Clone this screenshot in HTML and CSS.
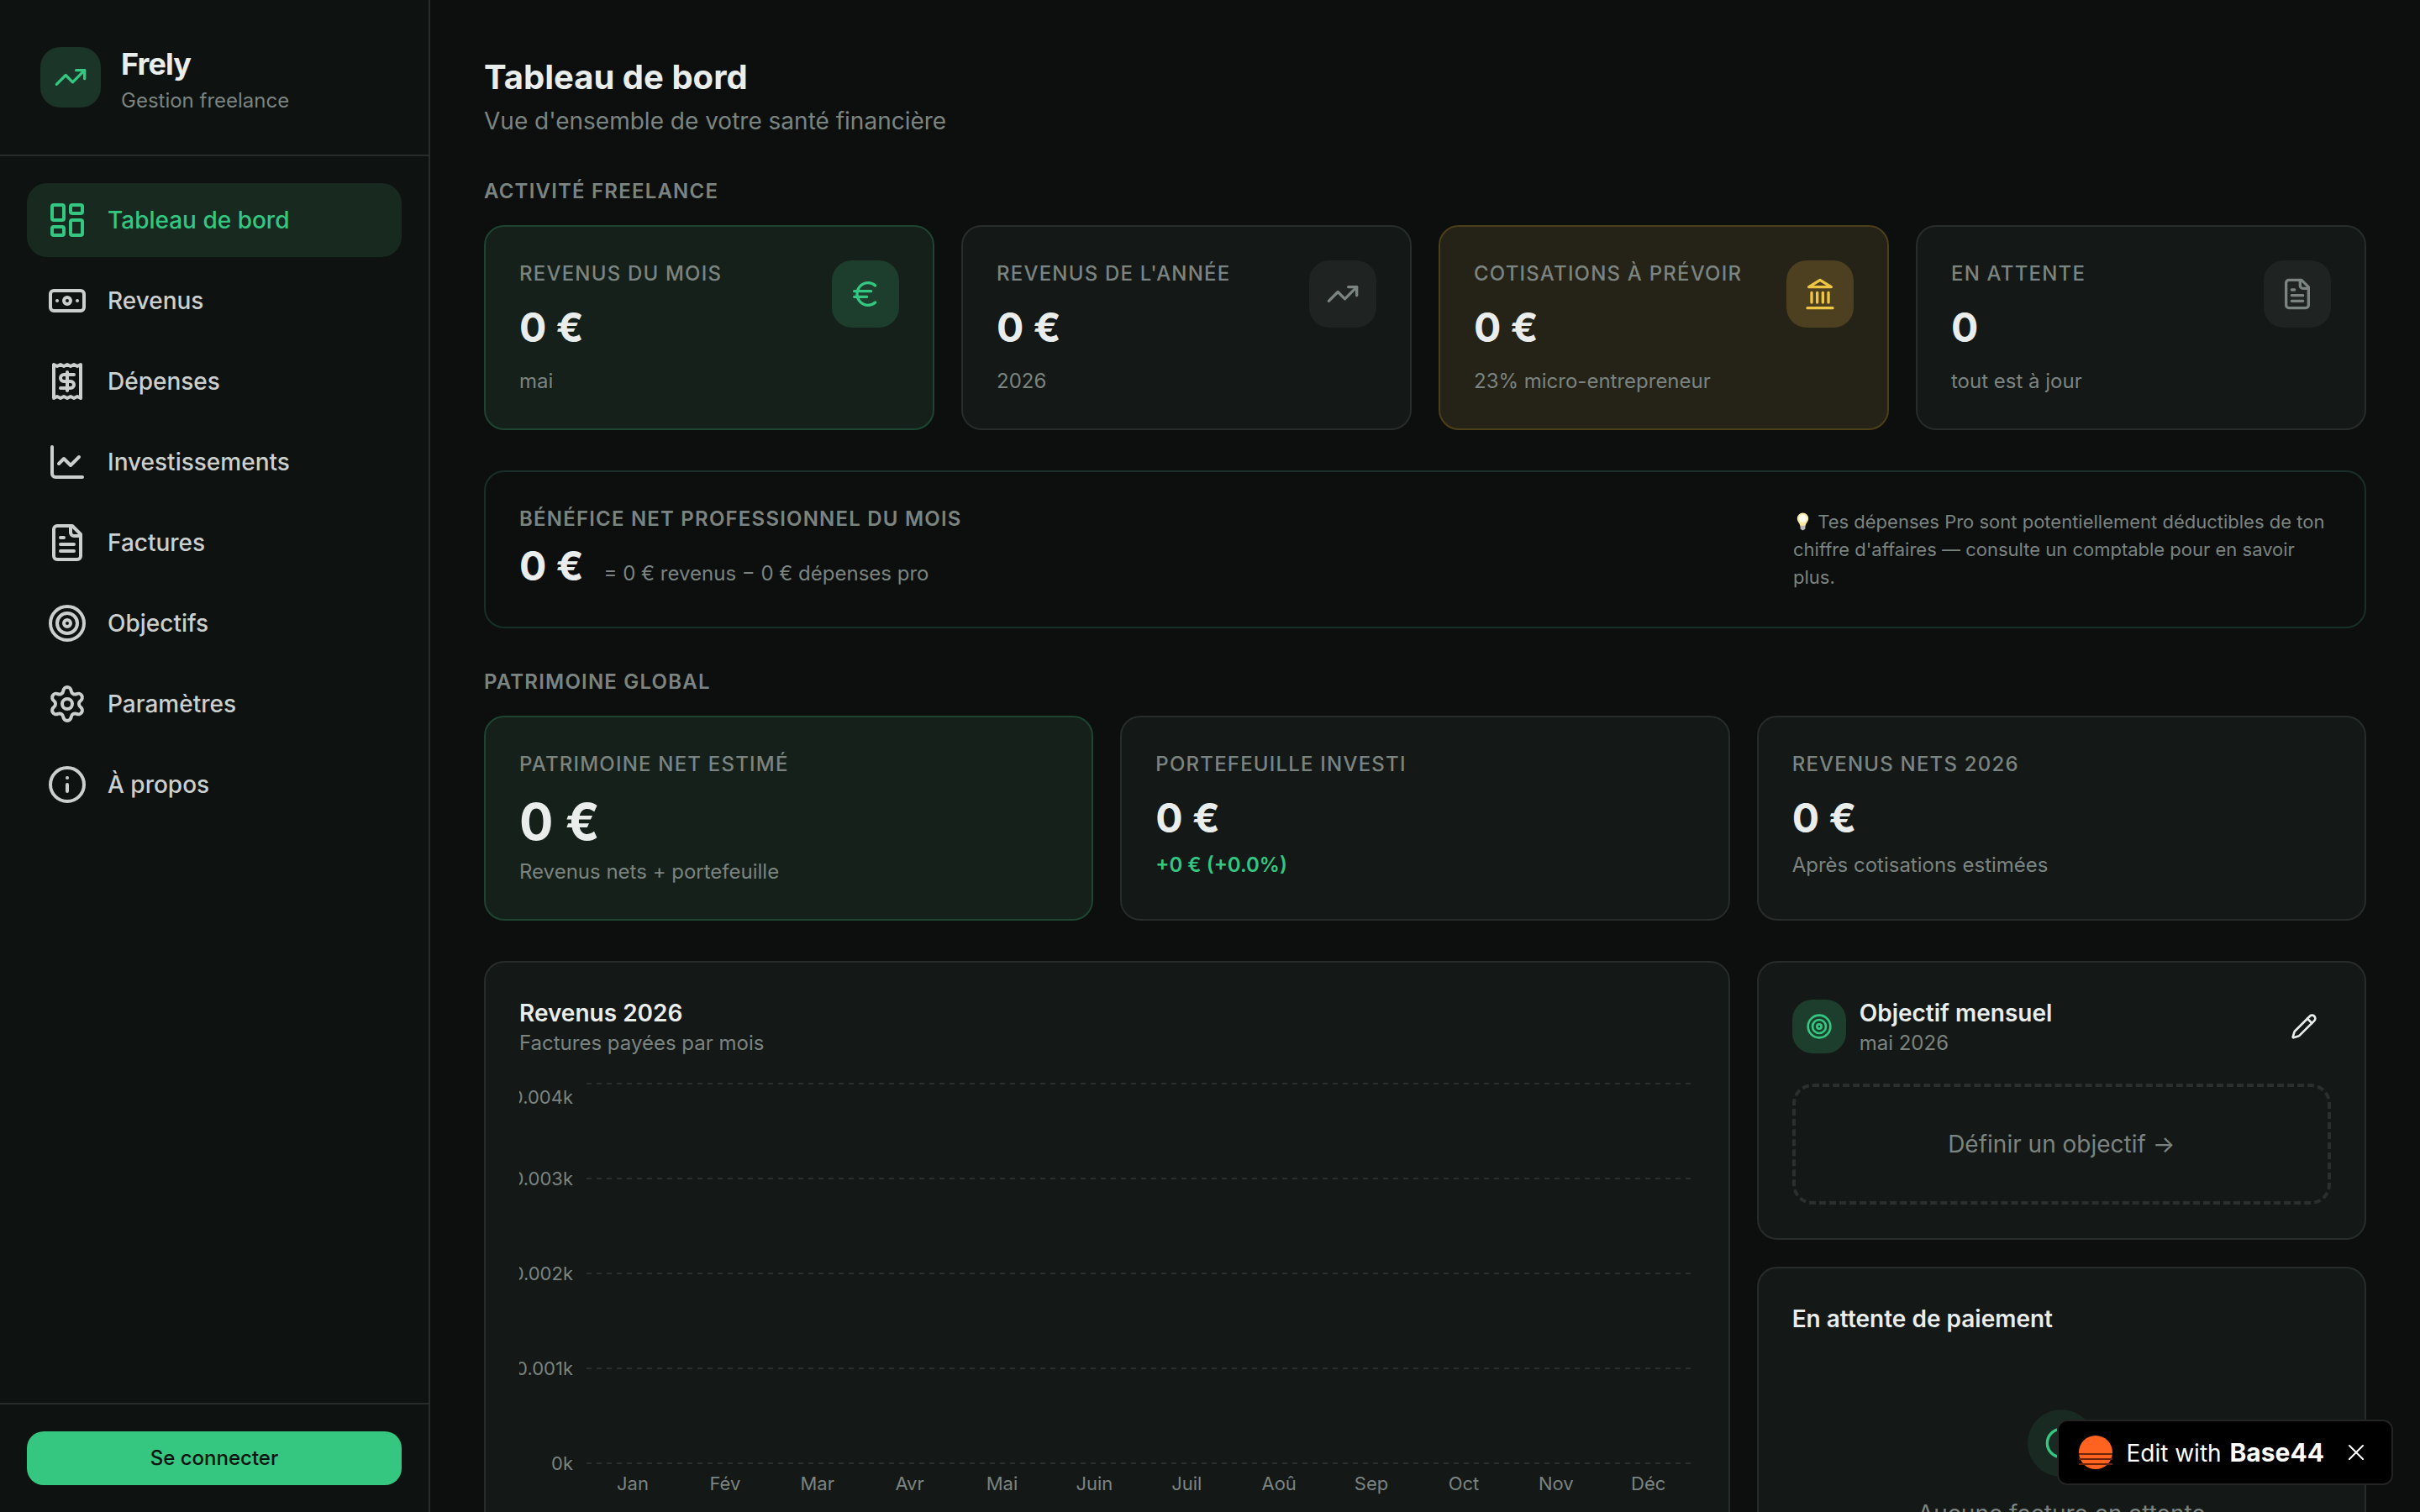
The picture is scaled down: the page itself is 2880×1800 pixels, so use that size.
FILE: index.html
```
<!DOCTYPE html>
<html lang="fr">
<head>
    <meta charset="UTF-8">
    <title>Frely - Tableau de bord</title>
    <meta name="viewport" content="width=device-width, initial-scale=1.0">
    <link rel="stylesheet" href="styles.css">
</head>
<body>
    <!-- Icônes réutilisées -->
    <svg class="sprite" aria-hidden="true">
        <symbol id="i-trend" viewBox="0 0 24 24">
            <path d="M22 7 13.5 15.5 8.5 10.5 2 17"/>
            <path d="M16 7h6v6"/>
        </symbol>
        <symbol id="i-file" viewBox="0 0 24 24">
            <path d="M15 2H6a2 2 0 0 0-2 2v16a2 2 0 0 0 2 2h12a2 2 0 0 0 2-2V7Z"/>
            <path d="M14 2v4a2 2 0 0 0 2 2h4"/>
            <path d="M10 9H8M16 13H8M16 17H8"/>
        </symbol>
        <symbol id="i-target" viewBox="0 0 24 24">
            <circle cx="12" cy="12" r="10"/>
            <circle cx="12" cy="12" r="6"/>
            <circle cx="12" cy="12" r="2"/>
        </symbol>
    </svg>

    <div class="app">
        <aside class="sidebar">
            <div class="brand">
                <div class="brand-logo">
                    <svg class="icon icon-md"><use href="#i-trend"/></svg>
                </div>
                <div>
                    <div class="brand-name">Frely</div>
                    <div class="small muted">Gestion freelance</div>
                </div>
            </div>

            <nav class="nav">
                <a href="#" class="nav-item active">
                    <svg class="icon" viewBox="0 0 24 24"><rect width="7" height="9" x="3" y="3" rx="1"/><rect width="7" height="5" x="14" y="3" rx="1"/><rect width="7" height="9" x="14" y="12" rx="1"/><rect width="7" height="5" x="3" y="16" rx="1"/></svg>
                    Tableau de bord
                </a>
                <a href="#" class="nav-item">
                    <svg class="icon" viewBox="0 0 24 24"><rect width="20" height="12" x="2" y="6" rx="2"/><circle cx="12" cy="12" r="2"/><path d="M6 12h.01M18 12h.01"/></svg>
                    Revenus
                </a>
                <a href="#" class="nav-item">
                    <svg class="icon" viewBox="0 0 24 24"><path d="M4 2v20l2-1 2 1 2-1 2 1 2-1 2 1 2-1 2 1V2l-2 1-2-1-2 1-2-1-2 1-2-1-2 1Z"/><path d="M16 8h-6a2 2 0 1 0 0 4h4a2 2 0 1 1 0 4H8"/><path d="M12 17.5v-11"/></svg>
                    Dépenses
                </a>
                <a href="#" class="nav-item">
                    <svg class="icon" viewBox="0 0 24 24"><path d="M3 3v16a2 2 0 0 0 2 2h16"/><path d="m19 9-5 5-4-4-3 3"/></svg>
                    Investissements
                </a>
                <a href="#" class="nav-item">
                    <svg class="icon"><use href="#i-file"/></svg>
                    Factures
                </a>
                <a href="#" class="nav-item">
                    <svg class="icon"><use href="#i-target"/></svg>
                    Objectifs
                </a>
                <a href="#" class="nav-item">
                    <svg class="icon" viewBox="0 0 24 24"><path d="M9.671 4.136a2.34 2.34 0 0 1 4.659 0 2.34 2.34 0 0 0 3.319 1.915 2.34 2.34 0 0 1 2.33 4.033 2.34 2.34 0 0 0 0 3.831 2.34 2.34 0 0 1-2.33 4.033 2.34 2.34 0 0 0-3.319 1.915 2.34 2.34 0 0 1-4.659 0 2.34 2.34 0 0 0-3.32-1.915 2.34 2.34 0 0 1-2.33-4.033 2.34 2.34 0 0 0 0-3.831A2.34 2.34 0 0 1 6.35 6.051a2.34 2.34 0 0 0 3.319-1.915"/><circle cx="12" cy="12" r="3"/></svg>
                    Paramètres
                </a>
                <a href="#" class="nav-item">
                    <svg class="icon" viewBox="0 0 24 24"><circle cx="12" cy="12" r="10"/><path d="M12 16v-4M12 8h.01"/></svg>
                    À propos
                </a>
            </nav>

            <div class="sidebar-footer">
                <button type="button" class="btn-login">Se connecter</button>
            </div>
        </aside>

        <main class="main">
            <header class="page-header">
                <h1>Tableau de bord</h1>
                <p class="subtitle muted">Vue d'ensemble de votre santé financière</p>
            </header>

            <section>
                <h2 class="section-title">Activité freelance</h2>
                <div class="grid-4">
                    <div class="card card-green stat">
                        <div>
                            <div class="label">Revenus du mois</div>
                            <div class="value">0 €</div>
                            <div class="small muted stat-note">mai</div>
                        </div>
                        <div class="stat-icon">
                            <svg class="icon icon-md" viewBox="0 0 24 24"><path d="M4 10h12M4 14h9"/><path d="M19 6a7.7 7.7 0 0 0-5.2-2A7.9 7.9 0 0 0 6 12c0 4.4 3.5 8 7.8 8 2 0 3.8-.8 5.2-2"/></svg>
                        </div>
                    </div>
                    <div class="card stat">
                        <div>
                            <div class="label">Revenus de l'année</div>
                            <div class="value">0 €</div>
                            <div class="small muted stat-note">2026</div>
                        </div>
                        <div class="stat-icon">
                            <svg class="icon icon-md"><use href="#i-trend"/></svg>
                        </div>
                    </div>
                    <div class="card card-amber stat">
                        <div>
                            <div class="label">Cotisations à prévoir</div>
                            <div class="value">0 €</div>
                            <div class="small muted stat-note">23% micro-entrepreneur</div>
                        </div>
                        <div class="stat-icon">
                            <svg class="icon icon-md" viewBox="0 0 24 24"><path d="M3 22h18M6 18v-7M10 18v-7M14 18v-7M18 18v-7"/><path d="m12 2 8 5H4Z"/></svg>
                        </div>
                    </div>
                    <div class="card stat">
                        <div>
                            <div class="label">En attente</div>
                            <div class="value">0</div>
                            <div class="small muted stat-note">tout est à jour</div>
                        </div>
                        <div class="stat-icon">
                            <svg class="icon icon-md"><use href="#i-file"/></svg>
                        </div>
                    </div>
                </div>
            </section>

            <section class="card net">
                <div>
                    <h2 class="label net-label">Bénéfice net professionnel du mois</h2>
                    <div class="net-row">
                        <span class="value">0 €</span>
                        <span class="small muted">= 0 € revenus − 0 € dépenses pro</span>
                    </div>
                </div>
                <p class="tip muted">
                    <svg class="bulb" viewBox="0 0 24 24"><path d="M12 1a7 7 0 0 0-7 7c0 4 3 5 4 10h6c1-5 4-6 4-10a7 7 0 0 0-7-7Z" fill="#fbe9a0"/><circle cx="12" cy="8" r="5" fill="#fffdf0"/><path d="M9 17h6v4l-3 2-3-2Z" fill="#b9b9b9"/></svg>
                    Tes dépenses Pro sont potentiellement déductibles de ton chiffre d'affaires — consulte un comptable pour en savoir plus.
                </p>
            </section>

            <section>
                <h2 class="section-title">Patrimoine global</h2>
                <div class="grid-3">
                    <div class="card card-green">
                        <div class="label">Patrimoine net estimé</div>
                        <div class="value value-lg">0 €</div>
                        <div class="small muted card-note">Revenus nets + portefeuille</div>
                    </div>
                    <div class="card">
                        <div class="label">Portefeuille investi</div>
                        <div class="value">0 €</div>
                        <div class="small gain card-note">+0 € (+0.0%)</div>
                    </div>
                    <div class="card">
                        <div class="label">Revenus nets 2026</div>
                        <div class="value">0 €</div>
                        <div class="small muted card-note">Après cotisations estimées</div>
                    </div>
                </div>
            </section>

            <section class="grid-3">
                <div class="card chart-card">
                    <h3>Revenus 2026</h3>
                    <p class="small muted">Factures payées par mois</p>
                    <svg class="chart">
                        <g class="chart-grid">
                            <line x1="80" x2="100%" y1="32" y2="32"/>
                            <line x1="80" x2="100%" y1="145" y2="145"/>
                            <line x1="80" x2="100%" y1="258" y2="258"/>
                            <line x1="80" x2="100%" y1="371" y2="371"/>
                            <line x1="80" x2="100%" y1="484" y2="484"/>
                        </g>
                        <g class="chart-ticks">
                            <text x="64" y="56">0.004k</text>
                            <text x="64" y="153">0.003k</text>
                            <text x="64" y="266">0.002k</text>
                            <text x="64" y="379">0.001k</text>
                            <text x="64" y="492">0k</text>
                        </g>
                    </svg>
                    <div class="months muted">
                        <span>Jan</span><span>Fév</span><span>Mar</span><span>Avr</span><span>Mai</span><span>Juin</span><span>Juil</span><span>Aoû</span><span>Sep</span><span>Oct</span><span>Nov</span><span>Déc</span>
                    </div>
                </div>

                <div class="side">
                    <div class="card">
                        <div class="goal-head">
                            <div class="goal-icon">
                                <svg class="icon icon-sm"><use href="#i-target"/></svg>
                            </div>
                            <div class="goal-text">
                                <h3>Objectif mensuel</h3>
                                <p class="small muted">mai 2026</p>
                            </div>
                            <button type="button" class="btn-icon" aria-label="Modifier">
                                <svg class="icon icon-sm" viewBox="0 0 24 24"><path d="M21.174 6.812a1 1 0 0 0-3.986-3.987L3.842 16.174a2 2 0 0 0-.5.83l-1.321 4.352a.5.5 0 0 0 .623.622l4.353-1.32a2 2 0 0 0 .83-.497z"/><path d="m15 5 4 4"/></svg>
                            </button>
                        </div>
                        <button type="button" class="btn-goal">Définir un objectif →</button>
                    </div>

                    <div class="card">
                        <h3>En attente de paiement</h3>
                        <div class="empty">
                            <div class="empty-icon">
                                <svg class="icon icon-md" viewBox="0 0 24 24"><circle cx="12" cy="12" r="10"/><path d="m12 15 1 1 4-4"/></svg>
                            </div>
                            <p class="muted">Aucune facture en attente</p>
                        </div>
                    </div>
                </div>
            </section>
        </main>
    </div>

    <div class="badge">
        <svg class="badge-logo" viewBox="0 0 40 40">
            <circle cx="20" cy="20" r="20" fill="#ff631f"/>
            <path d="M0 22h40M0 28h40M0 34h40" stroke="#6b2408" stroke-width="2"/>
        </svg>
        <a href="#" class="badge-link">Edit with <strong>Base44</strong></a>
        <button type="button" class="badge-close" aria-label="Fermer">
            <svg class="icon" viewBox="0 0 24 24"><path d="M4 4l16 16M20 4 4 20"/></svg>
        </button>
    </div>
</body>
</html>
```

FILE: styles.css
```
:root {
    --bg: #0d0f0e;
    --sidebar: #0e1210;
    --card: #141817;
    --border: #282c2b;
    --text: #e9edeb;
    --muted: #7b8480;
    --green: #33c781;
    --green-soft: #1d3e2d;
    --radius: 24px;
}

* {
    box-sizing: border-box;
}

body {
    margin: 0;
    font-family: Inter, "Liberation Sans", sans-serif;
    font-size: 28px;
    line-height: 40px;
    background: var(--bg);
    color: var(--text);
}

h1, h2, h3, p {
    margin: 0;
}

h3 {
    font-size: 28px;
    font-weight: 600;
}

button {
    font: inherit;
    color: inherit;
    border: none;
    background: none;
    padding: 0;
    cursor: pointer;
}

.sprite {
    display: none;
}

.icon {
    display: block;
    flex-shrink: 0;
    width: 48px;
    height: 48px;
    fill: none;
    stroke: currentColor;
    stroke-width: 2;
    stroke-linecap: round;
    stroke-linejoin: round;
}

.icon-md {
    width: 40px;
    height: 40px;
}

.icon-sm {
    width: 32px;
    height: 32px;
}

.small {
    font-size: 24px;
    line-height: 32px;
}

.muted {
    color: var(--muted);
}

/* Structure */
.app {
    display: flex;
    height: 100vh;
    overflow: hidden;
}

.sidebar {
    display: flex;
    flex-direction: column;
    flex-shrink: 0;
    width: 512px;
    background: var(--sidebar);
    border-right: 2px solid var(--border);
}

.main {
    display: flex;
    flex-direction: column;
    flex: 1;
    gap: 48px;
    min-width: 0;
    padding: 64px;
    overflow-y: auto;
    scrollbar-width: none;
}

/* Barre latérale */
.brand {
    display: flex;
    align-items: center;
    gap: 24px;
    padding: 48px;
    border-bottom: 2px solid var(--border);
}

.brand-logo {
    display: grid;
    place-items: center;
    width: 72px;
    height: 72px;
    border-radius: var(--radius);
    background: #1b3528;
    color: var(--green);
}

.brand-name {
    font-size: 36px;
    line-height: 56px;
    font-weight: 700;
    letter-spacing: -0.025em;
}

.nav {
    display: flex;
    flex-direction: column;
    flex: 1;
    gap: 8px;
    padding: 32px;
}

.nav-item {
    display: flex;
    align-items: center;
    gap: 24px;
    height: 88px;
    padding: 0 24px;
    border-radius: var(--radius);
    color: #cbd0ce;
    font-weight: 500;
    text-decoration: none;
}

.nav-item.active {
    background: #182a20;
    color: var(--green);
}

.sidebar-footer {
    padding: 32px;
    border-top: 2px solid var(--border);
}

.btn-login {
    display: block;
    width: 100%;
    height: 64px;
    border-radius: 20px;
    background: #35c680;
    color: #0b130f;
    font-size: 24px;
    font-weight: 500;
}

/* Titres */
h1 {
    font-size: 40px;
    line-height: 56px;
    font-weight: 700;
}

.subtitle {
    margin-top: 4px;
}

.section-title {
    margin-bottom: 24px;
    color: var(--muted);
    font-size: 24px;
    line-height: 32px;
    font-weight: 600;
    letter-spacing: 0.05em;
    text-transform: uppercase;
}

/* Cartes */
.grid-4 {
    display: grid;
    grid-template-columns: repeat(4, 1fr);
    gap: 32px;
}

.grid-3 {
    display: grid;
    grid-template-columns: repeat(3, 1fr);
    gap: 32px;
}

.card {
    padding: 40px;
    border: 2px solid var(--border);
    border-radius: var(--radius);
    background: var(--card);
}

.card-green {
    background: #15201a;
    border-color: #1d4531;
}

.card-amber {
    background: #252217;
    border-color: #4c3f19;
}

.label {
    color: var(--muted);
    font-size: 24px;
    line-height: 32px;
    font-weight: 500;
    letter-spacing: 0.05em;
    text-transform: uppercase;
}

.value {
    margin-top: 16px;
    font-size: 48px;
    line-height: 64px;
    font-weight: 700;
}

.value-lg {
    font-size: 60px;
    line-height: 72px;
}

.card-note {
    margin-top: 8px;
}

.gain {
    color: var(--green);
    font-weight: 600;
}

.stat {
    display: flex;
    justify-content: space-between;
    align-items: flex-start;
}

.stat-note {
    margin-top: 16px;
}

.stat-icon {
    display: grid;
    place-items: center;
    width: 80px;
    height: 80px;
    border-radius: var(--radius);
    background: #1f2322;
    color: var(--muted);
}

.card-green .stat-icon {
    background: var(--green-soft);
    color: var(--green);
}

.card-amber .stat-icon {
    background: #4d4020;
    color: #eec643;
}

/* Bénéfice net */
.net {
    display: flex;
    justify-content: space-between;
    align-items: center;
    background: none;
    border-color: #19302a;
}

.net-label {
    font-weight: 600;
}

.net-row {
    display: flex;
    align-items: baseline;
    gap: 24px;
    margin-top: 8px;
}

.net-row .value {
    margin-top: 0;
}

.tip {
    max-width: 640px;
    font-size: 22px;
    line-height: 33px;
}

.bulb {
    width: 23px;
    height: 24px;
    vertical-align: -4px;
}

/* Graphique */
.chart-card {
    grid-column: span 2;
}

.chart {
    display: block;
    width: 100%;
    height: 492px;
}

.chart-grid line {
    stroke: #2b2f2e;
    stroke-width: 2;
    stroke-dasharray: 6 6;
}

.chart-ticks text {
    fill: var(--muted);
    font-size: 22px;
    text-anchor: end;
}

.months {
    display: grid;
    grid-template-columns: repeat(12, 1fr);
    margin-left: 80px;
    font-size: 22px;
    line-height: 32px;
    text-align: center;
}

/* Colonne de droite */
.side {
    display: flex;
    flex-direction: column;
    gap: 32px;
}

.goal-head {
    display: flex;
    align-items: center;
    gap: 16px;
    margin-bottom: 32px;
}

.goal-icon {
    display: grid;
    place-items: center;
    width: 64px;
    height: 64px;
    border-radius: var(--radius);
    background: var(--green-soft);
    color: var(--green);
}

.goal-text {
    flex: 1;
}

.btn-icon {
    display: grid;
    place-items: center;
    width: 64px;
    height: 64px;
}

.btn-goal {
    display: block;
    width: 100%;
    padding: 48px;
    border: 4px dashed #2b2f2e;
    border-radius: var(--radius);
    color: var(--muted);
}

.empty {
    display: flex;
    flex-direction: column;
    align-items: center;
    gap: 24px;
    margin-top: 24px;
    padding: 64px 0;
}

.empty-icon {
    display: grid;
    place-items: center;
    width: 80px;
    height: 80px;
    border-radius: 50%;
    background: #192a22;
    color: var(--green);
}

/* Badge Base44 */
.badge {
    position: fixed;
    right: 32px;
    bottom: 32px;
    display: flex;
    align-items: center;
    height: 78px;
    padding: 0 30px 0 24px;
    border: 2px solid #242424;
    border-radius: 12px;
    background: #000;
    color: #fff;
}

.badge-logo {
    width: 40px;
    height: 40px;
    margin-right: 16px;
}

.badge-link {
    color: inherit;
    text-decoration: none;
}

.badge-link strong {
    margin-left: 2px;
    font-size: 30px;
    font-weight: 700;
}

.badge-close {
    margin-left: 26px;
}

.badge-close .icon {
    width: 24px;
    height: 24px;
}
```
